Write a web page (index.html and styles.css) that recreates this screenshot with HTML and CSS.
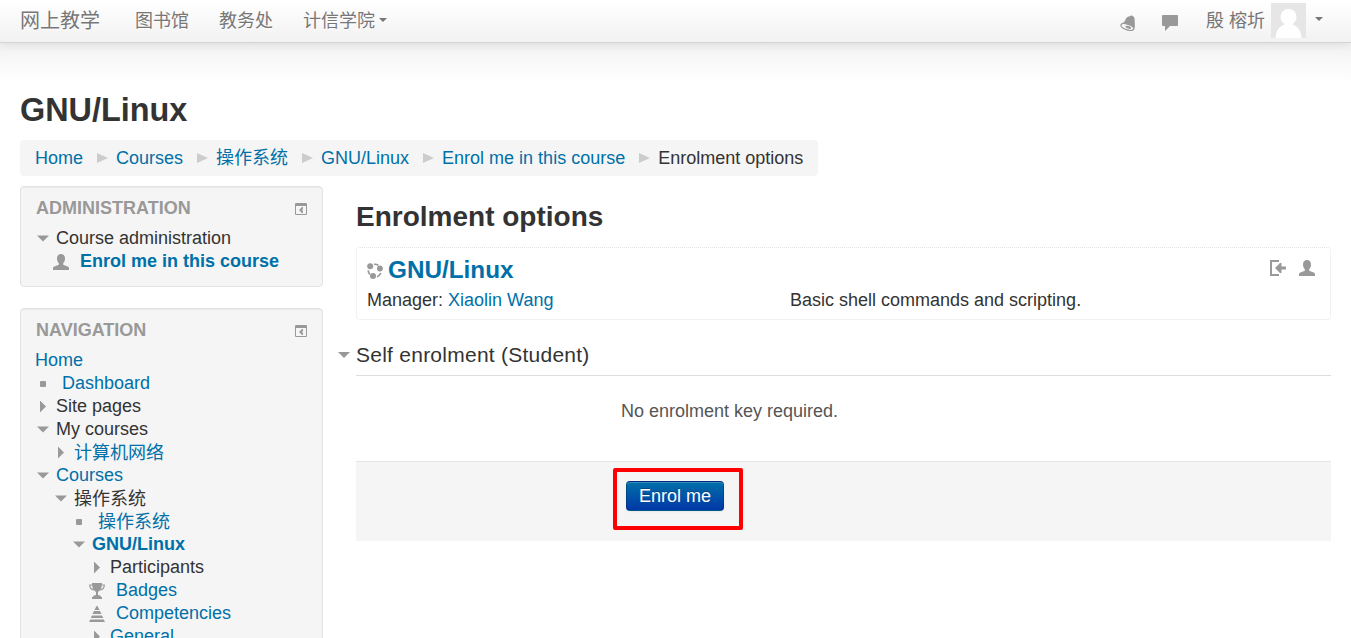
FILE: index.html
```html
<!DOCTYPE html>
<html lang="zh-CN">
<head>
<meta charset="utf-8">
<title>GNU/Linux: Enrolment options</title>
<link rel="stylesheet" href="styles.css">
</head>
<body>
<svg class="defs" width="0" height="0">
  <symbol id="user" viewBox="0 0 16 16"><path d="M8 0c2.500 0 4 1.700 4 4.500 0 2-.7 3.700-1.800 4.700v1.600l4.400 1.800c.9.400 1.400 1 1.400 2V16H0v-1.400c0-1 .5-1.600 1.400-2l4.400-1.800V9.200C4.700 8.200 4 6.500 4 4.500 4 1.700 5.500 0 8 0z"/></symbol>
  <symbol id="dock" viewBox="0 0 12 12"><path fill-rule="evenodd" d="M0 1a1 1 0 0 1 1-1h10a1 1 0 0 1 1 1v10a1 1 0 0 1-1 1H1a1 1 0 0 1-1-1zM1 3v8h10V3z"/><path d="M4 7l3-3h1v2L7 7l1 1v2H7z"/></symbol>
</svg>
<header class="navbar">
  <a class="brand">网上教学</a>
  <nav class="menu"><a>图书馆</a><a>教务处</a><a>计信学院<i class="caret"></i></a></nav>
  <div class="tools">
    <svg class="icon bell" viewBox="0 0 16 16"><path d="M6 3.500C7.500 1.500 9 1.300 10 1.200L11.500.2l1 .8c2 .8 2.300 2.500 2.200 5 0 2.200.4 4 .1 6.500L13.500 14C12 11.500 6 8.500 1.500 9 4.500 7.500 5 5.500 6 3.500z"/><ellipse cx="7.300" cy="12" rx="6.700" ry="2.800" transform="rotate(18 7.300 12)" fill="#f6f6f6" stroke="#999" stroke-width="1.300"/><ellipse cx="8.300" cy="12.300" rx="3" ry="1.300" transform="rotate(18 8.300 12.300)"/></svg>
    <svg class="icon chat" viewBox="0 0 16 16"><path d="M1 0h14a1 1 0 0 1 1 1v9a1 1 0 0 1-1 1H8l-5 5v-5H1a1 1 0 0 1-1-1V1a1 1 0 0 1 1-1z"/></svg>
    <span class="username">殷 榕圻</span>
    <svg class="avatar" viewBox="0 0 35 35"><path fill="#e6e6e6" d="M0 0h35v35H0z"/><circle cx="17.500" cy="14" r="8" fill="#fff"/><path fill="#fff" d="M4.500 35c.5-8 4-12 10-14h6c6 2 9.500 6 10 14z"/></svg>
    <i class="caret"></i>
  </div>
</header>
<div class="page">
  <h1>GNU/Linux</h1>
  <ul class="breadcrumb">
    <li><a>Home</a></li><li><a>Courses</a></li><li><a>操作系统</a></li><li><a>GNU/Linux</a></li><li><a>Enrol me in this course</a></li><li>Enrolment options</li>
  </ul>
  <div class="columns">
    <aside>
      <section class="block admin">
        <div class="block-head"><h2>Administration</h2><svg class="dock"><use href="#dock"/></svg></div>
        <ul class="tree">
          <li><i class="arrow down"></i>Course administration</li>
          <li class="l1 leaf"><svg class="icon"><use href="#user"/></svg><a><b>Enrol me in this course</b></a></li>
        </ul>
      </section>
      <section class="block">
        <div class="block-head"><h2>Navigation</h2><svg class="dock"><use href="#dock"/></svg></div>
        <ul class="tree">
          <li class="root"><a>Home</a></li>
          <li class="item"><i class="bullet"></i><a>Dashboard</a></li>
          <li><i class="arrow right"></i>Site pages</li>
          <li><i class="arrow down"></i>My courses</li>
          <li class="l1 cjk"><i class="arrow right"></i><a>计算机网络</a></li>
          <li><i class="arrow down"></i><a>Courses</a></li>
          <li class="l1 cjk"><i class="arrow down"></i><span>操作系统</span></li>
          <li class="l2 item cjk"><i class="bullet"></i><a>操作系统</a></li>
          <li class="l2"><i class="arrow down"></i><a><b>GNU/Linux</b></a></li>
          <li class="l3"><i class="arrow right"></i>Participants</li>
          <li class="l3 leaf"><svg class="icon" viewBox="0 0 16 16"><path d="M3 0h10c0 4-.8 7-4 9v3c2 .3 3 1 3 2h1v2H3v-2h1c0-1 1-1.700 3-2V9C3.800 7 3 4 3 0z"/><path fill="none" stroke="#999" stroke-width="1.200" d="M3.500 2H.7c0 3 1.800 4.500 4.300 5M12.500 2h2.800c0 3-1.800 4.500-4.300 5"/></svg><a>Badges</a></li>
          <li class="l3 leaf"><svg class="icon" viewBox="0 0 16 16"><path d="M7.500 0h1L10.500 4h-5zM5 5h6l1.500 3h-9zM3 9.500h10l1.300 2.500H1.700zM1.300 13.500h13.400L16 16H0z"/></svg><a>Competencies</a></li>
          <li class="l3"><i class="arrow right"></i><a>General</a></li>
        </ul>
      </section>
    </aside>
    <main>
      <h2 class="title">Enrolment options</h2>
      <section class="course">
        <div class="course-head">
          <svg class="icon" viewBox="0 0 16 16"><circle cx="3.200" cy="3.200" r="3"/><circle cx="12.900" cy="5.500" r="2.900"/><circle cx="6" cy="13" r="3"/><path fill="none" stroke="#999" stroke-width="1.700" d="M7 1.300q2.500-.3 4.300.9M1.200 7.300q.1 2.400 1.700 4.200M10 13.800q2.700-1 3.800-3.800"/></svg>
          <h3><a>GNU/Linux</a></h3>
          <div class="course-icons">
            <svg class="icon" viewBox="0 0 16 16"><path d="M0 0h9v2H2v12h7v2H0zM5 8l5-5h1.500v3.500H16v3h-4.500V13H10z"/></svg>
            <svg class="icon"><use href="#user"/></svg>
          </div>
        </div>
        <div class="course-info"><div>Manager: <a>Xiaolin Wang</a></div><div>Basic shell commands and scripting.</div></div>
      </section>
      <h3 class="legend"><i class="arrow down"></i>Self enrolment (Student)</h3>
      <p class="nokey">No enrolment key required.</p>
      <div class="actions"><div class="highlight"><button>Enrol me</button></div></div>
    </main>
  </div>
</div>
</body>
</html>
```
FILE: styles.css
```css
* { box-sizing: border-box; }
html { height: 100%; overflow: hidden; }
body { margin: 0; height: 638px; overflow: hidden; color: #333; background: #fff; font: 18px/23px "Liberation Sans", "Noto Sans CJK SC", sans-serif; }
h1, h2, h3, ul, p { margin: 0; padding: 0; }
ul { list-style: none; }
a { color: #0070a8; }
.defs { position: absolute; }
.icon { width: 16px; height: 16px; fill: #999; flex: none; }

.navbar { position: relative; display: flex; height: 43px; padding: 0 20px; line-height: 42px; background: linear-gradient(#fff, #f2f2f2); border-bottom: 1px solid #d4d4d4; box-shadow: 0 1px 10px rgba(0,0,0,.1); color: #777; }
.navbar a { color: #777; text-shadow: 0 1px 0 #fff; }
.brand { font-size: 20px; }
.menu { display: flex; gap: 30px; margin-left: 35px; }
.caret { display: inline-block; width: 0; border: 4px solid transparent; border-top-color: #777; border-bottom: 0; vertical-align: 5px; margin-left: 4px; }
.tools { display: flex; align-items: flex-start; margin-left: auto; }
.bell { margin-top: 15px; }
.chat { margin: 15px 28px 0 26px; }
.username { line-height: 43px; }
.avatar { width: 35px; height: 35px; margin: 3px 5px 0 6px; }
.tools .caret { margin: 17px 8px 0 4px; }

.page { height: 595px; overflow: hidden; padding: 49px 20px 0; background: linear-gradient(#f2f2f2, #fff 40px); }
h1 { font-size: 32.400px; line-height: 36px; }
.breadcrumb { display: flex; width: max-content; height: 36px; margin-top: 12px; padding: 0 15px; line-height: 36px; background: #f5f5f5; border-radius: 4px; }
.breadcrumb li { display: flex; align-items: center; }
.breadcrumb li + li::before { content: ""; border: 5.5px solid transparent; border-left: 11px solid #ccc; border-right: 0; margin: 0 8px 0 14px; }

.columns { display: flex; gap: 33px; margin-top: 10px; }
aside { width: 303px; flex: none; }
.block { height: 400px; margin-bottom: 21px; padding: 9px 14px; background: #f5f5f5; border: 1px solid #e3e3e3; border-radius: 4px; box-shadow: inset 0 1px 1px rgba(0,0,0,.05); }
.admin { height: 101px; }
.block-head { display: flex; justify-content: space-between; align-items: center; height: 24px; padding: 0 1px; margin-bottom: 7px; }
.block-head h2 { font-size: 18px; line-height: 24px; color: #999; text-transform: uppercase; }
.dock { width: 12px; height: 12px; fill: #999; margin-top: 2px; }
.tree li { display: flex; align-items: center; height: 23px; padding-left: 2px; white-space: nowrap; }
.tree .root { padding-left: 0; }
.tree .l1 { padding-left: 20px; }
.tree .l2 { padding-left: 38px; }
.tree .l3 { padding-left: 56px; }
.tree .l1.leaf { padding-left: 18px; }
.tree .l3.leaf { padding-left: 54px; }
.tree .icon { margin: 1px 11px 0 0; }
.tree .cjk a, .tree .cjk span { padding-top: 1px; line-height: 24px; }
.arrow { width: 12px; height: 12px; margin-right: 7px; background: #999; flex: none; }
.down { clip-path: polygon(0 3px, 100% 3px, 50% 9px); }
.right { clip-path: polygon(3px 0, 9px 6px, 3px 12px); }
.bullet { width: 6px; height: 6px; margin: 1px 16px 0 3px; background: #999; border-radius: 1px; }

main { flex: 1; }
.title { margin-top: 11px; font-size: 28px; line-height: 40px; }
.course { height: 73px; margin-top: 10px; padding: 6px 15px 0 10px; border: 1px dotted #e5e5e5; border-radius: 4px; }
.course-head { display: flex; height: 32px; align-items: center; }
.course-head > .icon { margin: 1px 5px 0 0; }
.course-head h3 { font-size: 24.300px; line-height: 32px; }
.course-icons { display: flex; gap: 13px; margin: -4px 0 0 auto; }
.course-info { display: grid; grid-template-columns: 423px 1fr; margin-top: 3px; }
.legend { display: flex; align-items: center; height: 41px; margin: 15px 0 0; border-bottom: 1px solid #ddd; font-size: 21px; letter-spacing: .25px; font-weight: 400; line-height: 40px; }
.legend .arrow { margin: 0 6px 0 -18px; }
.nokey { margin: 24px 0 0 265px; color: #555; }
.actions { height: 80px; margin-top: 38px; padding: 7px 0 0 257px; background: #f5f5f5; border-top: 1px solid #e5e5e5; }
.highlight { width: 130px; height: 62px; padding: 9px 9px 0; border: 4px solid #f00; border-radius: 2px; margin-top: -1px; }
button { display: block; width: 98px; height: 30px; padding: 0; font: 18px/27px "Liberation Sans", sans-serif; color: #fff; background: linear-gradient(#0070a8, #0037a8); border: 1px solid rgba(0,0,0,.2); border-radius: 4px; box-shadow: inset 0 1px 0 rgba(255,255,255,.2), 0 1px 2px rgba(0,0,0,.05); text-shadow: 0 -1px 0 rgba(0,0,0,.25); }
```
